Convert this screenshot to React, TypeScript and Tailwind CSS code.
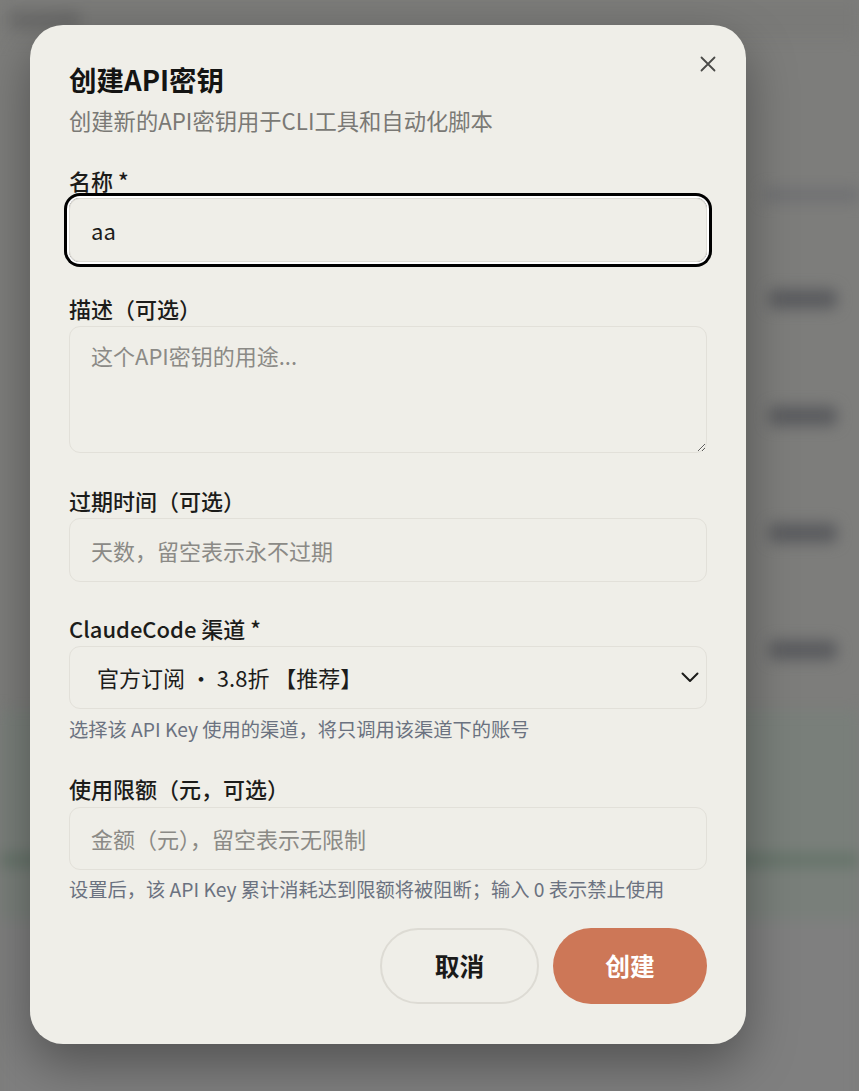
import React from "react";

const FONT = { fontFamily: '"Noto Sans CJK SC", "Noto Sans", sans-serif' };

function Label({ children }: { children: React.ReactNode }) {
  return (
    <div className="text-[22px] leading-[33px] font-medium text-[#1c1c1a]">{children}</div>
  );
}

function Pill() {
  return (
    <div className="flex h-[117px] items-center justify-end pr-[22px]">
      <div className="h-[20px] w-[68px] rounded-md bg-[#5b5c5f]" />
    </div>
  );
}

export default function App() {
  return (
    <div className="relative h-[1091px] w-full overflow-hidden bg-[#7d7d7b]" style={FONT}>
      {/* blurred page behind */}
      <div className="flex flex-col blur-[7px]">
        <div className="flex h-[40px] items-center bg-[#7a7a78] pl-[10px]">
          <div className="h-[18px] w-[70px] rounded bg-[#6a6a69]" />
        </div>
        <div className="h-[140px]" />
        <div className="flex h-[30px] items-center justify-end">
          <div className="h-[14px] w-[95px] bg-[#707173]" />
        </div>
        <div className="h-[30px]" />
        <Pill />
        <Pill />
        <Pill />
        <Pill />
        <div className="h-[2px]" />
        <div className="flex h-[210px] flex-col bg-[#797f7a]">
          <div className="h-[143px]" />
          <div className="h-[14px] bg-[#66746a]" />
        </div>
        <div className="h-[200px] bg-[#7f7f7f]" />
      </div>

      {/* modal overlay */}
      <div className="absolute inset-0 pl-[30px] pt-[25px]">
        <div className="relative w-[716px] rounded-[33px] bg-[#efeee8] px-[39px] pt-[35px] pb-[40px] shadow-[0_20px_50px_rgba(0,0,0,0.35)]">
          <button className="absolute right-[30px] top-[31px] flex h-[16px] w-[16px] items-center justify-center text-[#4a4a48]">
            <svg width="16" height="16" viewBox="0 0 16 16" fill="none" stroke="currentColor" strokeWidth="1.8" strokeLinecap="round">
              <path d="M1.5 1.5 L14.5 14.5 M14.5 1.5 L1.5 14.5" />
            </svg>
          </button>

          <h2 className="text-[27.5px] leading-[38px] font-bold text-[#141413]">创建API密钥</h2>
          <p className="mt-[6px] text-[22.3px] leading-[33px] text-[#7a7975]">
            创建新的API密钥用于CLI工具和自动化脚本
          </p>

          <div className="mt-[27px] flex flex-col">
            <Label>名称 *</Label>
            <input
              defaultValue="aa"
              className="mt-[1px] h-[64px] w-full rounded-[11px] border border-[#dedcd5] bg-transparent px-[21px] text-[22px] text-[#1c1c1a] outline-none ring-[3px] ring-black ring-offset-2 ring-offset-white"
              style={FONT}
            />

            <div className="mt-[30px]">
              <Label>描述（可选）</Label>
            </div>
            <textarea
              placeholder="这个API密钥的用途..."
              className="mt-[1px] h-[127px] w-full rounded-[11px] border border-[#e2e0d9] bg-transparent px-[21px] py-[12px] text-[22px] leading-[33px] text-[#1c1c1a] outline-none placeholder:text-[#8b8a86]"
              style={FONT}
            />

            <div className="mt-[31px]">
              <Label>过期时间（可选）</Label>
            </div>
            <input
              placeholder="天数，留空表示永不过期"
              className="mt-[1px] h-[64px] w-full rounded-[11px] border border-[#e2e0d9] bg-transparent px-[21px] text-[22px] text-[#1c1c1a] outline-none placeholder:text-[#8b8a86]"
              style={FONT}
            />

            <div className="mt-[30px]">
              <Label>ClaudeCode 渠道 *</Label>
            </div>
            <div className="mt-[1px] flex h-[63px] w-full items-center justify-between rounded-[11px] border border-[#e2e0d9] pl-[27px] pr-[7px] text-[22px] text-[#1c1c1a]">
              <span>官方订阅 · 3.8折 【推荐】</span>
              <svg width="18" height="11" viewBox="0 0 18 11" fill="none" stroke="#1c1c1a" strokeWidth="2" strokeLinecap="round" strokeLinejoin="round">
                <path d="M1.5 1.5 L9 9 L16.5 1.5" />
              </svg>
            </div>
            <p className="mt-[7px] text-[19.25px] leading-[27.5px] text-[#6b7280]">
              选择该 API Key 使用的渠道，将只调用该渠道下的账号
            </p>

            <div className="mt-[28px]">
              <Label>使用限额（元，可选）</Label>
            </div>
            <input
              placeholder="金额（元），留空表示无限制"
              className="mt-[2px] h-[63px] w-full rounded-[11px] border border-[#e2e0d9] bg-transparent px-[21px] text-[22px] text-[#1c1c1a] outline-none placeholder:text-[#8b8a86]"
              style={FONT}
            />
            <p className="mt-[6px] text-[19.25px] leading-[27.5px] text-[#6b7280]">
              设置后，该 API Key 累计消耗达到限额将被阻断；输入 0 表示禁止使用
            </p>

            <div className="mt-[25px] flex justify-end gap-[14px]">
              <button className="h-[76px] w-[159px] rounded-full border-2 border-[#dddbd4] text-[24.75px] font-semibold text-[#1a1a19]">
                取消
              </button>
              <button className="h-[76px] w-[154px] rounded-full bg-[#cd7757] text-[24.75px] font-semibold text-white">
                创建
              </button>
            </div>
          </div>
        </div>
      </div>
    </div>
  );
}
